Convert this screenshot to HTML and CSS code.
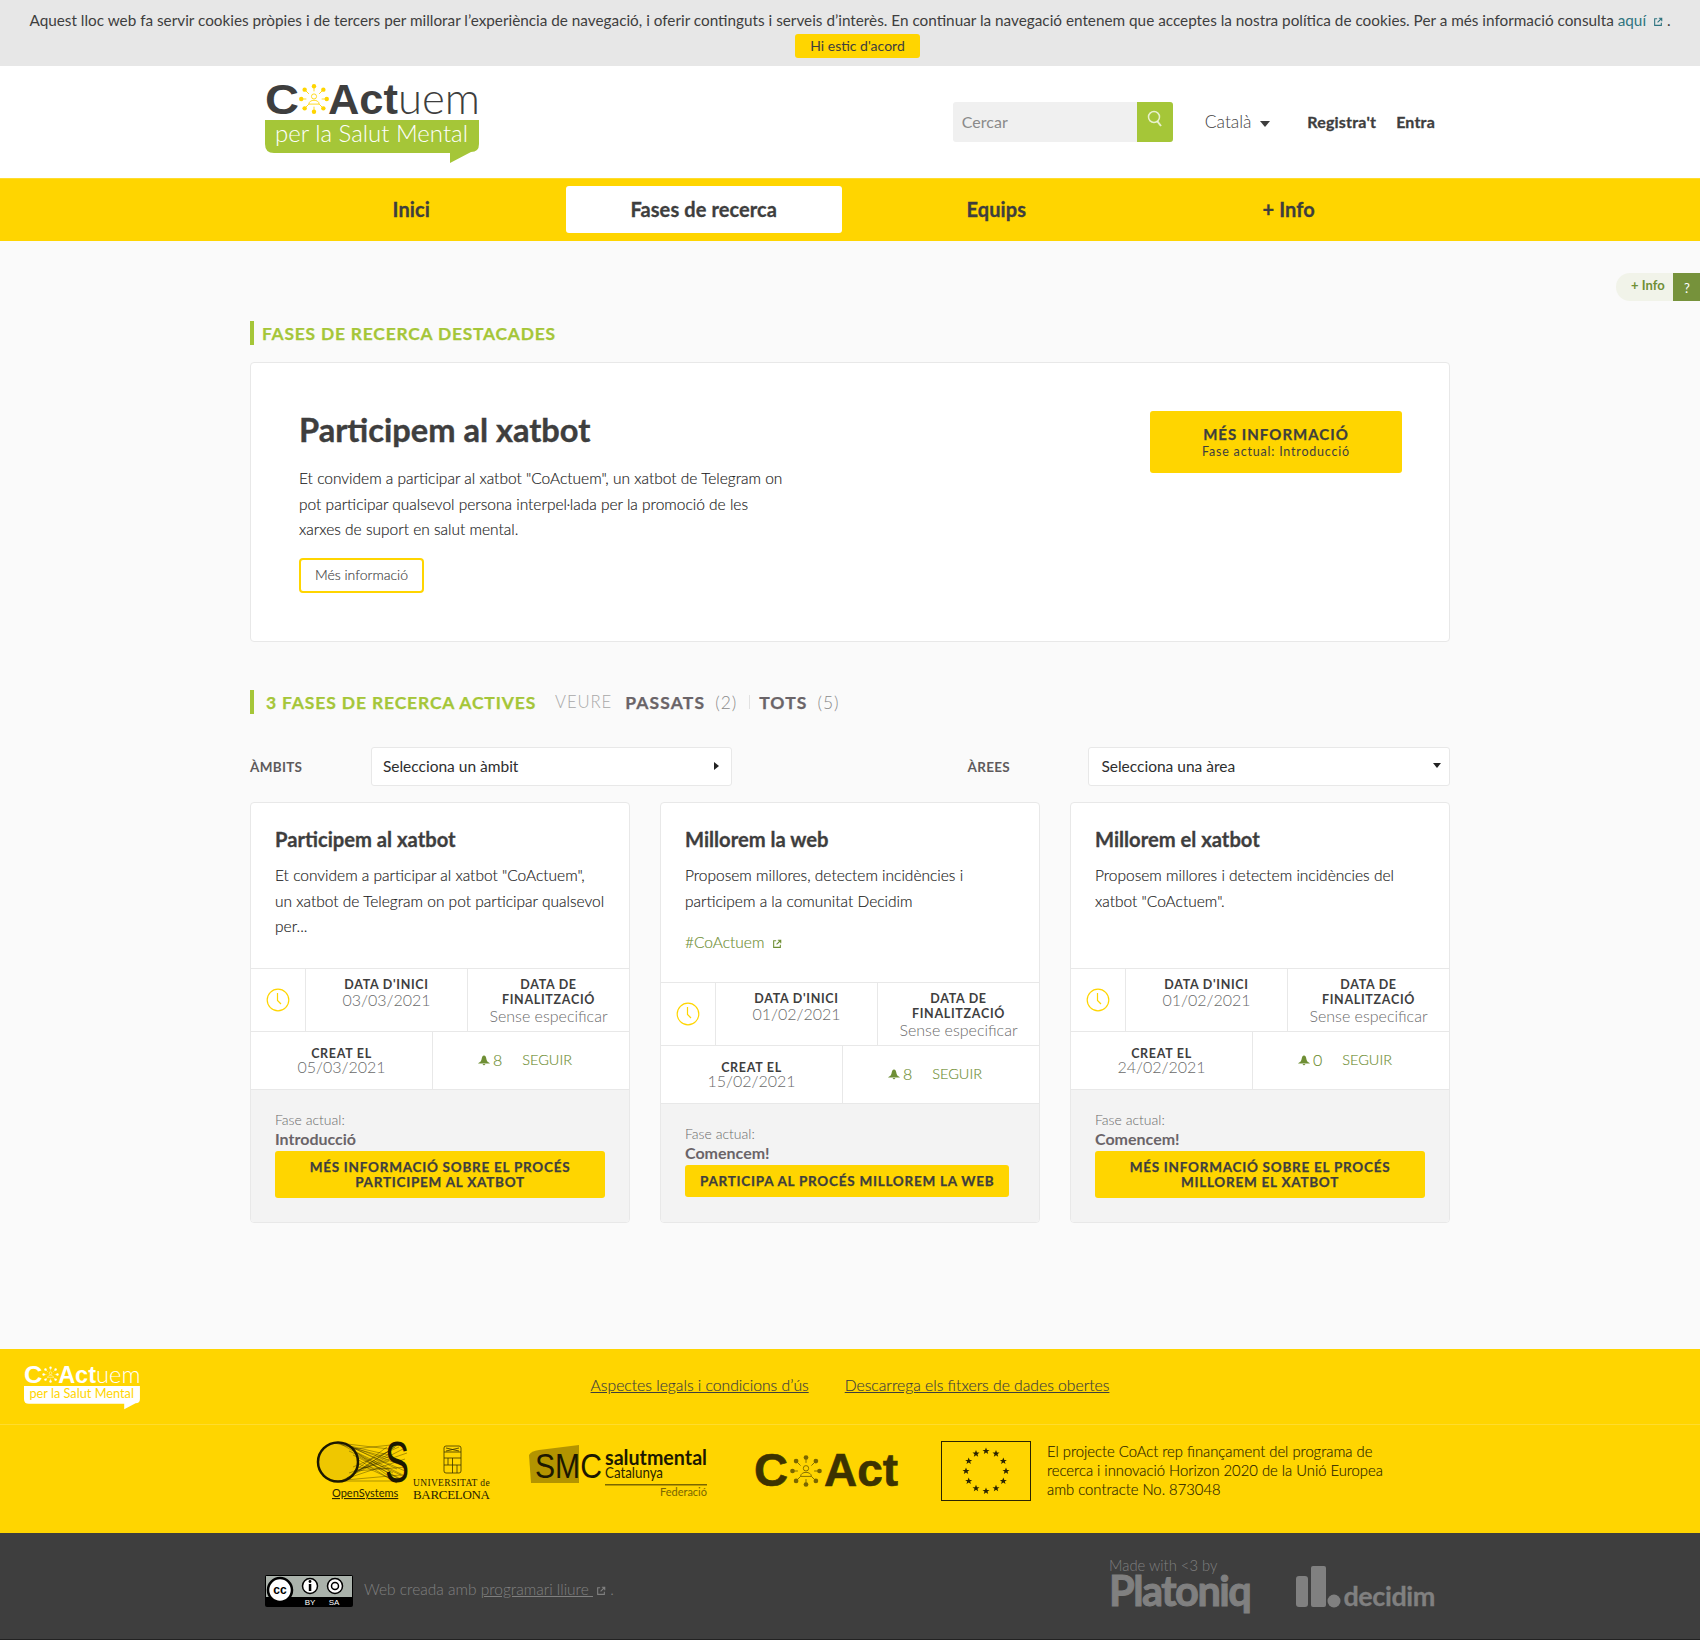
FILE: index.html
```html
<!DOCTYPE html>
<html lang="ca">
<head>
    <meta charset="UTF-8">
    <title>CoActuem per la Salut Mental</title>
    <link rel="stylesheet" href="styles.css">
</head>
<body>
    <svg class="defs" width="0" height="0">
        <defs>
            <symbol id="sun" viewBox="-20 -20 40 40">
                <g fill="none" stroke="currentColor" stroke-width="1">
                    <path d="M0-15V-9M0 15V9M-15 0H-9M15 0H9M-11-11L-6-6M11 11L6 6M-11 11L-6 6M11-11L6-6"/>
                    <circle cy="-3" r="3"/>
                    <path d="M-6 6C-6 0 6 0 6 6Z"/>
                </g>
                <g fill="currentColor">
                    <circle cy="-15" r="2.6"/><circle cy="15" r="2.6"/><circle cx="-15" r="2.6"/><circle cx="15" r="2.6"/>
                    <circle cx="-11" cy="-11" r="2.6"/><circle cx="11" cy="11" r="2.6"/><circle cx="-11" cy="11" r="2.6"/><circle cx="11" cy="-11" r="2.6"/>
                </g>
            </symbol>
            <symbol id="logo" viewBox="0 0 216 84">
                <text class="logo-bold" x="0" y="34" font-size="43" textLength="34" lengthAdjust="spacingAndGlyphs">C</text>
                <use href="#sun" x="32" y="0" width="34" height="38" class="logo-sun"/>
                <text class="logo-bold" x="63" y="34" font-size="43" textLength="70" lengthAdjust="spacingAndGlyphs">Act</text>
                <text class="logo-light" x="133" y="34" font-size="43" textLength="82" lengthAdjust="spacingAndGlyphs">uem</text>
                <path class="logo-bubble" d="M0 40H214V64Q214 72 206 72L185 83V73H9Q0 73 0 64Z"/>
                <text class="logo-tag" x="10" y="62" font-size="24" textLength="193" lengthAdjust="spacingAndGlyphs">per la Salut Mental</text>
            </symbol>
            <symbol id="ext" viewBox="0 0 12 12">
                <path d="M5 2H2V10H10V7M7 1.5H10.5V5M10.5 1.5L5.5 6.5" fill="none" stroke="currentColor" stroke-width="1.3"/>
            </symbol>
            <symbol id="clock" viewBox="0 0 24 24">
                <circle cx="12" cy="12" r="10.8" fill="none" stroke="currentColor" stroke-width="1.2"/>
                <path d="M11.5 5V12.5L15 16" fill="none" stroke="currentColor" stroke-width="1.2"/>
            </symbol>
            <symbol id="bell" viewBox="0 0 12 12">
                <path d="M6 1.500C7.500 1.500 8 3 8.500 5.500S10.500 8 12 9.500H0C1.500 8 3 8 3.500 5.500S4.500 1.500 6 1.500ZM4.500 10H7.500L6 11.500Z" fill="currentColor"/>
            </symbol>
            <polygon id="star" points="0,-3.600 1,-1.100 3.500,-1.100 1.500,.5 2.200,3 0,1.500 -2.200,3 -1.500,.5 -3.500,-1.100 -1,-1.100"/>
        </defs>
    </svg>

    <div class="cookies">
        <p>Aquest lloc web fa servir cookies pròpies i de tercers per millorar l’experiència de navegació, i oferir continguts i serveis d’interès. En continuar la navegació entenem que acceptes la nostra política de cookies. Per a més informació consulta <a href="#">aquí <svg class="ext"><use href="#ext"/></svg></a> .</p>
        <a class="cookies-ok" href="#">Hi estic d'acord</a>
    </div>

    <header class="topbar">
        <div class="wrap topbar-in">
            <a class="logo" href="#"><svg width="216" height="84"><use href="#logo"/></svg></a>
            <div class="tools">
                <form class="search">
                    <input type="text" placeholder="Cercar">
                    <button type="button" aria-label="Cercar">
                        <svg width="16" height="18" viewBox="0 0 16 18"><circle cx="7" cy="7" r="5.500" fill="none" stroke="#fff" stroke-width="1.500" opacity=".75"/><path d="M10.500 11.500L14 16" stroke="#fff" stroke-width="2" opacity=".75"/></svg>
                    </button>
                </form>
                <a class="lang" href="#">Català <span class="caret"></span></a>
                <a class="user-link register" href="#">Registra't</a>
                <a class="user-link" href="#">Entra</a>
            </div>
        </div>
    </header>

    <nav class="mainnav">
        <div class="wrap mainnav-in">
            <a href="#">Inici</a>
            <a href="#" class="active">Fases de recerca</a>
            <a href="#">Equips</a>
            <a href="#">+ Info</a>
        </div>
    </nav>

    <main>
        <a class="help" href="#"><span class="help-text">+ Info</span><span class="help-q">?</span></a>

        <div class="content">
            <h2 class="sec-title first">Fases de recerca destacades</h2>

            <section class="featured">
                <div class="featured-text">
                    <h1>Participem al xatbot</h1>
                    <p>Et convidem a participar al xatbot "CoActuem", un xatbot de Telegram on pot participar qualsevol persona interpel·lada per la promoció de les xarxes de suport en salut mental.</p>
                    <a class="btn-outline" href="#">Més informació</a>
                </div>
                <a class="featured-cta" href="#">
                    <strong>Més informació</strong>
                    <span>Fase actual: Introducció</span>
                </a>
            </section>

            <div class="list-head">
                <h2 class="sec-title">3 fases de recerca actives</h2>
                <span class="see">Veure</span>
                <a class="filter" href="#">Passats</a><span class="count">(2)</span>
                <span class="sep"></span>
                <a class="filter" href="#">Tots</a><span class="count">(5)</span>
            </div>

            <div class="filters">
                <label>Àmbits</label>
                <div class="select select-left"><span>Selecciona un àmbit</span><i class="arrow-right"></i></div>
                <label class="label-right">Àrees</label>
                <div class="select"><span>Selecciona una àrea</span><i class="arrow-down"></i></div>
            </div>

            <div class="cards">
                <article class="card">
                    <div class="card-top">
                        <h3>Participem al xatbot</h3>
                        <p>Et convidem a participar al xatbot "CoActuem", un xatbot de Telegram on pot participar qualsevol per...</p>
                    </div>
                    <div class="dates">
                        <div class="dates-icon"><svg class="clock"><use href="#clock"/></svg></div>
                        <div><b>Data d'inici</b>03/03/2021</div>
                        <div><b>Data de finalització</b>Sense especificar</div>
                    </div>
                    <div class="meta">
                        <div class="created"><b>Creat el</b>05/03/2021</div>
                        <div class="follow"><svg class="bell"><use href="#bell"/></svg><span>8</span><a href="#">Seguir</a></div>
                    </div>
                    <div class="card-foot">
                        <small>Fase actual:</small>
                        <strong>Introducció</strong>
                        <a class="btn" href="#">Més informació sobre el procés Participem al xatbot</a>
                    </div>
                </article>

                <article class="card">
                    <div class="card-top">
                        <h3>Millorem la web</h3>
                        <p>Proposem millores, detectem incidències i participem a la comunitat Decidim</p>
                        <a class="tag" href="#">#CoActuem <svg class="ext"><use href="#ext"/></svg></a>
                    </div>
                    <div class="dates">
                        <div class="dates-icon"><svg class="clock"><use href="#clock"/></svg></div>
                        <div><b>Data d'inici</b>01/02/2021</div>
                        <div><b>Data de finalització</b>Sense especificar</div>
                    </div>
                    <div class="meta">
                        <div class="created"><b>Creat el</b>15/02/2021</div>
                        <div class="follow"><svg class="bell"><use href="#bell"/></svg><span>8</span><a href="#">Seguir</a></div>
                    </div>
                    <div class="card-foot">
                        <small>Fase actual:</small>
                        <strong>Comencem!</strong>
                        <a class="btn" href="#">Participa al procés Millorem la web</a>
                    </div>
                </article>

                <article class="card">
                    <div class="card-top">
                        <h3>Millorem el xatbot</h3>
                        <p>Proposem millores i detectem incidències del xatbot "CoActuem".</p>
                        <p class="blank">&nbsp;</p>
                    </div>
                    <div class="dates">
                        <div class="dates-icon"><svg class="clock"><use href="#clock"/></svg></div>
                        <div><b>Data d'inici</b>01/02/2021</div>
                        <div><b>Data de finalització</b>Sense especificar</div>
                    </div>
                    <div class="meta">
                        <div class="created"><b>Creat el</b>24/02/2021</div>
                        <div class="follow"><svg class="bell"><use href="#bell"/></svg><span>0</span><a href="#">Seguir</a></div>
                    </div>
                    <div class="card-foot">
                        <small>Fase actual:</small>
                        <strong>Comencem!</strong>
                        <a class="btn" href="#">Més informació sobre el procés Millorem el xatbot</a>
                    </div>
                </article>
            </div>
        </div>
    </main>

    <footer>
        <div class="foot-links">
            <a class="foot-logo" href="#"><svg width="117" height="46"><use href="#logo"/></svg></a>
            <a href="#">Aspectes legals i condicions d’ús</a>
            <a href="#">Descarrega els fitxers de dades obertes</a>
        </div>
        <div class="partners">
            <svg class="partner-ub" width="173" height="60" viewBox="0 0 173 60">
                <ellipse cx="21" cy="21" rx="20" ry="19.500" fill="#c9a800" opacity=".3"/>
                <g stroke="#2b2400" stroke-width=".45" fill="none" opacity=".85">
                    <path d="M22 2L76 32M26 2L80 28M30 4L84 24M34 6L88 30M37 10L90 36M39 14L86 40M40 18L80 42M40 22L74 38M39 26L72 28M37 30L72 20M34 34L74 12M30 37L78 6M26 40L82 3M22 41L86 8M18 2L76 18M24 3L72 14M30 3L72 8M36 8L74 4M38 30L90 26M34 36L88 18M28 39L84 34M24 40L78 40M40 12L70 34M40 28L70 6M36 14L84 38M36 26L82 6M32 10L88 36M32 32L90 12"/>
                </g>
                <ellipse cx="21" cy="21" rx="20" ry="19.500" fill="none" stroke="#1c1800" stroke-width="2.500"/>
                <text x="68" y="41" font-family="'Liberation Sans', sans-serif" font-size="58" fill="#1c1800" textLength="24" lengthAdjust="spacingAndGlyphs">S</text>
                <text x="15" y="56" font-family="Lato, sans-serif" font-size="11" fill="#2b2400" text-decoration="underline">OpenSystems</text>
                <g fill="none" stroke="#3a3200" stroke-width=".8">
                    <rect x="127" y="5" width="17" height="27" rx="2"/>
                    <path d="M127 11H144M127 17H144M127 24H144M135.500 17V32M131 17V24M140 24V32M129 7L142 10M142 7L129 10"/>
                </g>
                <text x="96" y="45" font-family="'Liberation Serif', serif" font-size="9.500" fill="#2b2400" letter-spacing=".4" textLength="77">UNIVERSITAT de</text>
                <text x="96" y="58" font-family="'Liberation Serif', serif" font-size="13" fill="#2b2400" textLength="77">BARCELONA</text>
            </svg>
            <svg width="178" height="52" viewBox="0 0 178 52">
                <path d="M0 10Q2 6 10 5L50 0V36L50 38H2Z" fill="#b39400"/>
                <text x="6" y="33" font-family="'Liberation Sans', sans-serif" font-size="35" fill="#1c1800" textLength="67" lengthAdjust="spacingAndGlyphs">SMC</text>
                <text x="76" y="20" font-family="Lato, sans-serif" font-weight="700" font-size="21" fill="#1c1800" textLength="102" lengthAdjust="spacingAndGlyphs">salutmental</text>
                <text x="76" y="33" font-family="Lato, sans-serif" font-size="15" fill="#2b2400" textLength="58" lengthAdjust="spacingAndGlyphs">Catalunya</text>
                <rect x="76" y="39" width="102" height="1.500" fill="#7a6600"/>
                <text x="178" y="51" text-anchor="end" font-family="Lato, sans-serif" font-size="11" fill="#7a6600">Federació</text>
            </svg>
            <svg width="144" height="36" viewBox="0 0 144 36">
                <text x="0" y="33" font-family="'Liberation Sans', sans-serif" font-weight="700" font-size="46" fill="#3d3300" stroke="#3d3300" stroke-width=".6" textLength="34" lengthAdjust="spacingAndGlyphs">C</text>
                <use href="#sun" x="34" y="0" width="36" height="36" class="coact-sun"/>
                <text x="70" y="33" font-family="'Liberation Sans', sans-serif" font-weight="700" font-size="46" fill="#3d3300" stroke="#3d3300" stroke-width=".6" textLength="74" lengthAdjust="spacingAndGlyphs">Act</text>
            </svg>
            <svg class="eu" width="90" height="60" viewBox="0 0 90 60">
                <rect x=".5" y=".5" width="89" height="59" fill="none" stroke="#2b2400"/>
                <g fill="#2b2400">
                    <use href="#star" x="45" y="10"/><use href="#star" x="55" y="12.700"/><use href="#star" x="62.300" y="20"/>
                    <use href="#star" x="65" y="30"/><use href="#star" x="62.300" y="40"/><use href="#star" x="55" y="47.300"/>
                    <use href="#star" x="45" y="50"/><use href="#star" x="35" y="47.300"/><use href="#star" x="27.700" y="40"/>
                    <use href="#star" x="25" y="30"/><use href="#star" x="27.700" y="20"/><use href="#star" x="35" y="12.700"/>
                </g>
            </svg>
            <p>El projecte CoAct rep finançament del programa de recerca i innovació Horizon 2020 de la Unió Europea amb contracte No. 873048</p>
        </div>
    </footer>

    <div class="subfoot">
        <div class="wrap subfoot-in">
            <div class="license">
                <svg width="88" height="32" viewBox="0 0 88 32">
                    <rect width="88" height="32" rx="2" fill="#000"/>
                    <rect x="1" y="1" width="86" height="21" fill="#aab2ab"/>
                    <circle cx="15" cy="15" r="12" fill="#fff" stroke="#000" stroke-width="2.500"/>
                    <text x="15" y="19" text-anchor="middle" font-family="'Liberation Sans', sans-serif" font-weight="700" font-size="12">cc</text>
                    <circle cx="45" cy="11" r="7.500" fill="#fff" stroke="#000" stroke-width="1.500"/>
                    <rect x="43.800" y="9" width="2.500" height="7"/><circle cx="45" cy="6.500" r="1.400"/>
                    <circle cx="70" cy="11" r="7.500" fill="#fff" stroke="#000" stroke-width="1.500"/>
                    <circle cx="70" cy="11" r="3.500" fill="none" stroke="#000" stroke-width="1.500"/>
                    <text x="45" y="30" text-anchor="middle" font-family="'Liberation Sans', sans-serif" font-size="8" fill="#fff">BY</text>
                    <text x="69" y="30" text-anchor="middle" font-family="'Liberation Sans', sans-serif" font-size="8" fill="#fff">SA</text>
                </svg>
                <p>Web creada amb <a href="#">programari lliure <svg class="ext"><use href="#ext"/></svg></a> .</p>
            </div>
            <div class="made">
                <div class="platoniq">
                    <span>Made with &lt;3 by</span>
                    <b>Platoniq</b>
                </div>
                <div class="decidim">
                    <svg width="47" height="42" viewBox="0 0 47 42" fill="#808080">
                        <rect x="2" y="10" width="12" height="31" rx="3"/>
                        <rect x="17" y="0" width="15" height="41" rx="2"/>
                        <circle cx="40" cy="35" r="6.500"/>
                    </svg>
                    <b>decidim</b>
                </div>
            </div>
        </div>
    </div>
</body>
</html>
```

FILE: styles.css
```css
* {
    box-sizing: border-box;
}
body {
    font-family: Lato, "Open Sans", sans-serif;
    font-size: 16px;
    color: #3e3e3e;
    margin: 0;
    background-color: #fafafa;
}
a {
    color: inherit;
    text-decoration: none;
}
p {
    margin: 0;
}
.defs {
    position: absolute;
}
.wrap {
    width: 1170px;
    margin: 0 auto;
}
.ext {
    width: 10px;
    height: 10px;
    vertical-align: -1px;
    margin-left: 3px;
}

/* cookies */
.cookies {
    height: 66px;
    padding-top: 9px;
    background-color: #e7e7e7;
    text-align: center;
    font-size: 15.300px;
    line-height: 22px;
}
.cookies p a {
    color: #2f7480;
}
.cookies-ok {
    display: block;
    width: 125px;
    height: 24px;
    margin: 3px 0 0 795px;
    background-color: #ffd500;
    border-radius: 3px;
    font-size: 14px;
    line-height: 23px;
    text-align: center;
}

/* header */
.topbar {
    height: 112px;
    background-color: #fff;
}
.topbar-in {
    display: flex;
    justify-content: space-between;
    align-items: flex-start;
}
.logo {
    display: block;
    margin-top: 14px;
    --logo-dark: #3e3e3e;
    --logo-bubble: #a5c638;
    --logo-tag: #fff;
    --logo-tag-weight: 300;
    --logo-sun: #ffd500;
}
.logo-bold {
    font-family: "Liberation Sans", sans-serif;
    font-weight: 700;
    fill: var(--logo-dark);
}
.logo-light {
    font-family: Lato, sans-serif;
    font-weight: 300;
    fill: var(--logo-dark);
}
.logo-bubble {
    fill: var(--logo-bubble);
}
.logo-tag {
    font-family: Lato, sans-serif;
    font-weight: var(--logo-tag-weight);
    fill: var(--logo-tag);
}
.logo-sun {
    color: var(--logo-sun);
}
.tools {
    display: flex;
    align-items: center;
    height: 40px;
    margin-top: 36px;
}
.search {
    display: flex;
    width: 220px;
    height: 40px;
    margin-right: 32px;
    border-radius: 3px;
    overflow: hidden;
    background-color: #f0f0f0;
}
.search input {
    flex: 1;
    min-width: 0;
    padding: 0 9px 2px;
    border: 0;
    background: transparent;
    font: inherit;
}
.search input::placeholder {
    color: #8a8a8a;
}
.search button {
    width: 36px;
    border: 0;
    padding: 0 0 4px;
    background-color: #a5c638;
}
.lang {
    margin-right: 37px;
    padding-bottom: 2px;
    font-size: 17.400px;
    font-weight: 300;
}
.caret {
    display: inline-block;
    margin-left: 4px;
    border: 5.500px solid transparent;
    border-top: 6px solid #3e3e3e;
    border-bottom: 0;
    vertical-align: 1px;
}
.user-link {
    padding-bottom: 2px;
    font-weight: 700;
    letter-spacing: .2px;
    -webkit-text-stroke: .3px;
}
.register {
    margin-right: 20px;
}

/* main nav */
.mainnav {
    height: 63px;
    background-color: #ffd500;
    border-top: 1px solid #ffdc2e;
}
.mainnav-in {
    display: grid;
    grid-template-columns: repeat(4, 1fr);
    padding-top: 7px;
}
.mainnav a {
    margin: 0 8px;
    height: 47px;
    line-height: 46px;
    text-align: center;
    font-size: 20px;
    font-weight: 700;
    letter-spacing: .1px;
    -webkit-text-stroke: .3px;
    border-radius: 3px;
}
.mainnav a.active {
    background-color: #fff;
}

/* content */
main {
    position: relative;
    height: 1108px;
}
.help {
    position: absolute;
    top: 32px;
    right: 0;
    display: flex;
    height: 28px;
    font-size: 13px;
    font-weight: 700;
    color: #6f8f35;
}
.help-text {
    width: 57px;
    padding-left: 15px;
    line-height: 25px;
    background-color: #f1f3e9;
    border-radius: 14px 0 0 14px;
}
.help-q {
    width: 27px;
    padding-left: 1px;
    line-height: 30px;
    text-align: center;
    color: #fff;
    background-color: #76923b;
    font-weight: 400;
}
.content {
    width: 1200px;
    margin: 0 auto;
    padding-top: 80px;
}
.sec-title {
    margin: 0;
    padding: 1px 0 0 9px;
    height: 24px;
    border-left: 4px solid #a5c638;
    font-size: 17.400px;
    line-height: 24px;
    font-weight: 700;
    letter-spacing: .8px;
    -webkit-text-stroke: .25px;
    text-transform: uppercase;
    color: #a5c638;
}
.sec-title.first {
    margin-bottom: 17px;
    padding-left: 8px;
}

/* featured */
.featured {
    display: flex;
    justify-content: space-between;
    align-items: flex-start;
    height: 280px;
    padding: 47px 47px 0 48px;
    background-color: #fff;
    border: 1px solid #e8e8e8;
    border-radius: 4px;
}
.featured-text {
    width: 490px;
}
.featured h1 {
    margin: 0 0 16px;
    font-size: 32.600px;
    line-height: 40px;
    font-weight: 700;
    -webkit-text-stroke: .4px;
}
.featured p {
    font-weight: 300;
    font-size: 15.500px;
    line-height: 25.600px;
    color: #222;
    -webkit-text-stroke: .15px;
}
.btn-outline {
    display: inline-block;
    width: 125px;
    height: 35px;
    margin-top: 15px;
    border: 2px solid #ffd500;
    border-radius: 4px;
    background-color: #fff;
    line-height: 30px;
    font-size: 14px;
    font-weight: 300;
    -webkit-text-stroke: .15px;
    text-align: center;
}
.featured-cta {
    display: block;
    width: 252px;
    height: 62px;
    margin-top: 1px;
    padding-top: 13px;
    background-color: #ffd500;
    border-radius: 3px;
    text-align: center;
}
.featured-cta strong {
    display: block;
    font-size: 15px;
    line-height: 20px;
    font-weight: 700;
    letter-spacing: 1px;
    -webkit-text-stroke: .25px;
    text-transform: uppercase;
}
.featured-cta span {
    display: block;
    font-size: 12.500px;
    line-height: 15px;
    letter-spacing: .8px;
}

/* list head */
.list-head {
    display: flex;
    align-items: center;
    height: 24px;
    margin-top: 48px;
    font-size: 17.500px;
    letter-spacing: .9px;
    text-transform: uppercase;
}
.list-head .sec-title {
    padding-left: 12px;
    margin-right: 19px;
    font-size: 17.500px;
    letter-spacing: .85px;
}
.see {
    margin-right: 13px;
    font-size: 16.700px;
    font-weight: 300;
    color: #a8a8a8;
}
.filter {
    font-weight: 700;
    letter-spacing: 1.150px;
    -webkit-text-stroke: .25px;
    color: #6a6468;
}
.count {
    margin-left: 10px;
    font-weight: 300;
    color: #8a8a8a;
}
.sep {
    width: 1px;
    height: 14px;
    margin: 0 9px 0 12px;
    background-color: #e2e2e2;
}

/* filters */
.filters {
    display: flex;
    align-items: center;
    height: 39px;
    margin-top: 33px;
}
.filters label {
    width: 121px;
    font-size: 13.500px;
    font-weight: 700;
    letter-spacing: .3px;
    text-transform: uppercase;
    color: #5e5a5c;
}
.filters label.label-right {
    width: 121px;
    margin-left: 236px;
}
.select {
    display: flex;
    justify-content: space-between;
    align-items: center;
    width: 362px;
    height: 39px;
    padding: 0 12px 2px;
    background-color: #fff;
    border: 1px solid #e8e8e8;
    border-radius: 3px;
    font-size: 15.500px;
    color: #2e2e2e;
}
.select-left {
    width: 361px;
    padding-left: 11px;
}
.arrow-right {
    border: 4px solid transparent;
    border-left: 5px solid #222;
    border-right: 0;
}
.arrow-down {
    margin-right: -4px;
    border: 4px solid transparent;
    border-top: 5px solid #222;
    border-bottom: 0;
}

/* cards */
.cards {
    display: grid;
    grid-template-columns: repeat(3, 380px);
    gap: 30px;
    margin-top: 16px;
}
.card {
    display: flex;
    flex-direction: column;
    height: 421px;
    background-color: #fff;
    border: 1px solid #e8e8e8;
    border-radius: 4px;
    overflow: hidden;
}
.card-top {
    padding: 23px 24px 26px;
}
.card h3 {
    margin: 0 0 11px;
    font-size: 20.200px;
    line-height: 26px;
    font-weight: 700;
    -webkit-text-stroke: .3px;
}
.card p {
    margin-bottom: 2px;
    font-size: 15.500px;
    font-weight: 300;
    line-height: 25.600px;
    color: #222;
    -webkit-text-stroke: .15px;
}
.card p.blank {
    margin: 0;
}
.tag {
    display: block;
    margin-top: 16px;
    font-size: 15.500px;
    font-weight: 300;
    line-height: 25.600px;
    color: #6f8f35;
    -webkit-text-stroke: .15px;
}
.dates {
    display: grid;
    grid-template-columns: 54px 162px 1fr;
    height: 63px;
    border-top: 1px solid #e8e8e8;
    font-size: 16px;
    font-weight: 300;
    color: #6a6a6a;
    text-align: center;
    line-height: 16px;
}
.dates > div {
    padding: 8px 10px 0;
    border-left: 1px solid #e8e8e8;
}
.dates > div:first-child {
    border-left: 0;
    padding: 19px 0 0 0;
}
.dates b,
.meta b {
    display: block;
    font-size: 12.500px;
    line-height: 15.500px;
    font-weight: 700;
    letter-spacing: .7px;
    text-transform: uppercase;
    color: #3e3e3e;
}
.meta b {
    line-height: 13px;
}
.clock {
    width: 24px;
    height: 24px;
    color: #ffd500;
}
.meta {
    display: grid;
    grid-template-columns: 181px 1fr;
    height: 58px;
    border-top: 1px solid #e8e8e8;
    font-size: 16px;
    font-weight: 300;
    color: #6a6a6a;
    text-align: center;
    line-height: 14px;
}
.created {
    padding-top: 15px;
}
.follow {
    display: flex;
    align-items: center;
    justify-content: center;
    padding-right: 12px;
    border-left: 1px solid #e8e8e8;
    line-height: 20px;
    color: #6f8f35;
    -webkit-text-stroke: .15px;
}
.bell {
    width: 12px;
    height: 12px;
    margin-right: 3px;
}
.follow a {
    margin-left: 20px;
    font-size: 14.500px;
    text-transform: uppercase;
}
.card-foot {
    flex: 1;
    padding: 21px 24px 0;
    border-top: 1px solid #e8e8e8;
    background-color: #f3f3f3;
}
.card-foot small {
    display: block;
    font-size: 14px;
    font-weight: 300;
    line-height: 18px;
    color: #6a6a6a;
}
.card-foot strong {
    display: block;
    margin: -1px 0 1px;
    font-size: 16px;
    line-height: 22px;
    color: #6a6468;
}
.btn {
    display: inline-block;
    max-width: 330px;
    padding: 9px 15px 8px;
    background-color: #ffd500;
    border-radius: 3px;
    font-size: 13.500px;
    line-height: 15px;
    font-weight: 700;
    letter-spacing: .75px;
    -webkit-text-stroke: .25px;
    text-transform: uppercase;
    text-align: center;
}

/* footer */
footer {
    height: 184px;
    background-color: #ffd500;
}
.foot-links {
    position: relative;
    display: flex;
    justify-content: center;
    gap: 36px;
    height: 76px;
    padding-top: 26px;
    border-bottom: 1px solid #ffdc2e;
    font-size: 15.700px;
    line-height: 20px;
}
.foot-links a {
    text-decoration: underline;
    font-weight: 300;
    -webkit-text-stroke: .15px;
}
.foot-links .foot-logo {
    position: absolute;
    left: 24px;
    top: 15px;
    --logo-dark: #fff;
    --logo-bubble: #fff;
    --logo-tag: #ffd500;
    --logo-tag-weight: 400;
    --logo-sun: #fff;
    -webkit-text-stroke: 0;
}
.partners {
    display: flex;
    justify-content: center;
    align-items: center;
    height: 107px;
    padding: 0 0 16px 2px;
}
.partners svg {
    flex: none;
    overflow: visible;
}
.partner-ub {
    margin-right: 39px;
}
.partners svg:nth-child(2) {
    margin-right: 47px;
}
.coact-sun {
    color: #7a6600;
}
.partners svg:nth-child(3) {
    margin-right: 43px;
}
.partners p {
    width: 338px;
    margin-left: 16px;
    font-size: 14.800px;
    line-height: 19px;
    font-weight: 300;
    color: #2b2400;
    -webkit-text-stroke: .15px;
}

/* bottom */
.subfoot {
    height: 107px;
    background-color: #3e3e3e;
    border-bottom: 1px solid #222;
    color: #808080;
}
.subfoot-in {
    display: flex;
    justify-content: space-between;
    align-items: center;
    height: 106px;
}
.license {
    display: flex;
    align-items: center;
    gap: 11px;
    margin-top: 6px;
    font-size: 15.500px;
    font-weight: 300;
}
.license svg:first-child {
    margin-top: 4px;
}
.license a {
    text-decoration: underline;
}
.made {
    display: flex;
    align-items: flex-end;
    gap: 44px;
    margin-top: -7px;
}
.platoniq {
    margin-bottom: 2px;
}
.platoniq span {
    display: block;
    margin-bottom: 1px;
    font-size: 14.800px;
    font-weight: 300;
    line-height: 16px;
}
.platoniq b {
    display: block;
    font-size: 41.500px;
    line-height: 32px;
    font-weight: 700;
    letter-spacing: -1.500px;
    -webkit-text-stroke: 1px;
}
.decidim {
    display: flex;
    align-items: flex-end;
    gap: 2px;
}
.decidim b {
    font-size: 27px;
    line-height: 24px;
    font-weight: 700;
    letter-spacing: -.4px;
    -webkit-text-stroke: .3px;
}
```
